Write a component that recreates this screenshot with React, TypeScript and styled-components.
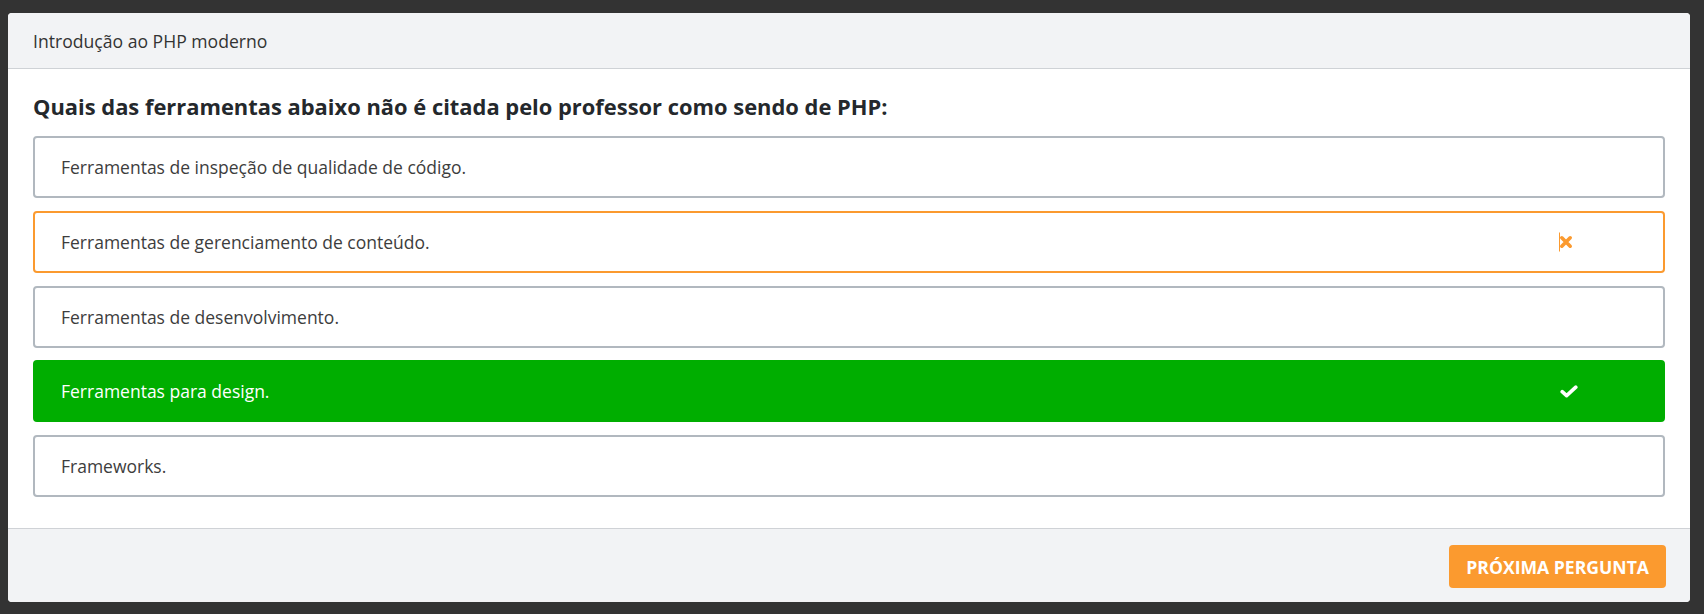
import React from "react";
import styled, { createGlobalStyle } from "styled-components";

const GlobalStyle = createGlobalStyle`
  html, body {
    margin: 0;
    padding: 0;
    background: #333333;
  }
  body {
    font-family: "Open Sans", "Noto Sans", sans-serif;
    color: #212529;
  }
  * { box-sizing: border-box; }
`;

const Page = styled.div`
  padding: 13px 14px 12px 8px;
`;

const Card = styled.div`
  background: #ffffff;
  border-radius: 4px;
  overflow: hidden;
  display: flex;
  flex-direction: column;
`;

const Header = styled.div`
  height: 56px;
  display: flex;
  align-items: center;
  padding: 0 25px;
  background: #f2f3f5;
  border-bottom: 1px solid #cfd2d6;
  font-size: 17.6px;
  color: #333333;
`;

const Body = styled.div`
  padding: 21px 25px 31px 25px;
  display: flex;
  flex-direction: column;
  gap: 12.75px;
`;

const Question = styled.h2`
  margin: 0 0 -0.75px 0;
  font-size: 21.9px;
  font-weight: 700;
  line-height: 34px;
  color: #24282c;
`;

type Status = "neutral" | "wrong" | "right";

const Option = styled.div<{ $status: Status }>`
  height: 62px;
  display: flex;
  align-items: center;
  justify-content: space-between;
  padding: 0 84px 0 26px;
  border-radius: 4px;
  font-size: 17.5px;
  border: 2px solid
    ${(p) =>
      p.$status === "wrong" ? "#fb9a2f" : p.$status === "right" ? "#00ae00" : "#b1b8bf"};
  background: ${(p) => (p.$status === "right" ? "#00ae00" : "#ffffff")};
  color: ${(p) => (p.$status === "right" ? "#ffffff" : "#3d3d3d")};
`;

const IconSlot = styled.span`
  display: flex;
  align-items: center;
  justify-content: center;
  width: 20px;
`;

const Footer = styled.div`
  border-top: 1px solid #cfd2d6;
  background: #f2f3f5;
  padding: 16px 24px 14px;
  display: flex;
  justify-content: flex-end;
`;

const NextButton = styled.button`
  height: 43px;
  padding: 0 17px;
  border: none;
  border-radius: 4px;
  background: #fb9a2f;
  color: #ffffff;
  font-family: "Open Sans", "Noto Sans", sans-serif;
  font-size: 17.6px;
  font-weight: 700;
  text-transform: uppercase;
  cursor: pointer;
`;

const WrongIcon = () => (
  <svg width="20" height="20" viewBox="0 0 20 20">
    <rect x="0" y="0.5" width="1" height="19" fill="#fb9a2f" />
    <path
      d="M2.8 5.8 L11.2 14.2 M11.2 5.8 L2.8 14.2"
      stroke="#fb9a2f"
      strokeWidth="3.6"
      strokeLinecap="round"
    />
  </svg>
);

const RightIcon = () => (
  <svg width="18" height="13" viewBox="0 0 18 13">
    <path
      d="M2.2 6.6 L6.6 10.6 L15.8 2.2"
      stroke="#ffffff"
      strokeWidth="3.6"
      fill="none"
      strokeLinecap="round"
      strokeLinejoin="round"
    />
  </svg>
);

const options: { text: string; status: Status }[] = [
  { text: "Ferramentas de inspeção de qualidade de código.", status: "neutral" },
  { text: "Ferramentas de gerenciamento de conteúdo.", status: "wrong" },
  { text: "Ferramentas de desenvolvimento.", status: "neutral" },
  { text: "Ferramentas para design.", status: "right" },
  { text: "Frameworks.", status: "neutral" },
];

export default function App() {
  return (
    <>
      <GlobalStyle />
      <Page>
        <Card>
          <Header>Introdução ao PHP moderno</Header>
          <Body>
            <Question>
              Quais das ferramentas abaixo não é citada pelo professor como sendo de PHP:
            </Question>
            {options.map((o) => (
              <Option key={o.text} $status={o.status}>
                <span>{o.text}</span>
                <IconSlot>
                  {o.status === "wrong" && <WrongIcon />}
                  {o.status === "right" && <RightIcon />}
                </IconSlot>
              </Option>
            ))}
          </Body>
          <Footer>
            <NextButton>Próxima pergunta</NextButton>
          </Footer>
        </Card>
      </Page>
    </>
  );
}
